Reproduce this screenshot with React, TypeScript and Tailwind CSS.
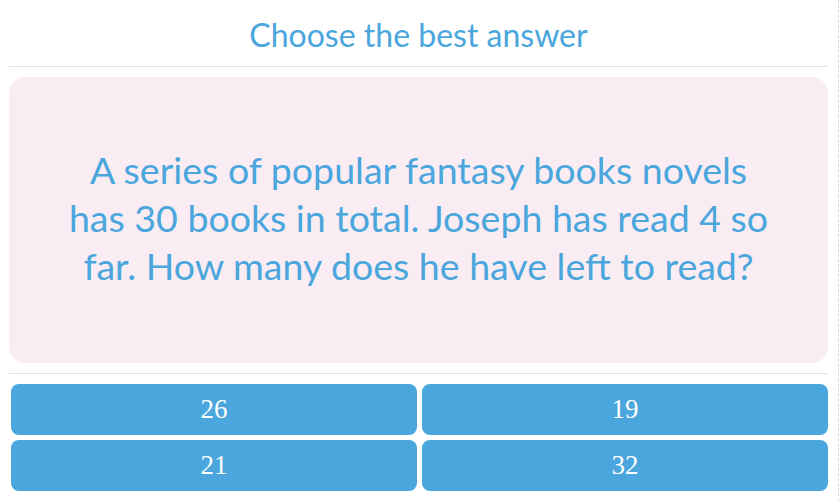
export default function App() {
  const answers = ["26", "19", "21", "32"];
  return (
    <div className="h-[501px] w-[840px] overflow-hidden bg-white">
      <div className="flex h-full w-[839px] flex-col border-r border-dashed border-[#d9d9d9] pl-[9px] pr-[10px]">
        <div className="flex h-[67px] items-center justify-center border-b border-[#e0e0e6] pt-[3px]">
          <h1 className="font-['Lato','Open_Sans',sans-serif] text-[32px] text-[#4aa6dc]">
            Choose the best answer
          </h1>
        </div>
        <div className="mt-[10px] flex h-[286px] items-center justify-center rounded-[16px] bg-[#f9edf3] pb-[4px]">
          <p className="max-w-[700px] text-center font-['Lato','Open_Sans',sans-serif] text-[37.5px] leading-[48px] text-[#4aa6dc]">
            A series of popular fantasy books novels has 30 books in total. Joseph has read 4 so far. How many does he have left to read?
          </p>
        </div>
        <div className="mt-[10px] border-t border-[#e0e0e6]" />
        <div className="mt-[10px] grid grid-cols-2 gap-x-[5px] gap-y-[5px] pl-[2px]">
          {answers.map((a) => (
            <button
              key={a}
              type="button"
              className="flex h-[51px] items-center justify-center rounded-[8px] bg-[#4aa6dc] font-['Liberation_Serif',serif] text-[27px] text-white"
            >
              {a}
            </button>
          ))}
        </div>
      </div>
    </div>
  );
}
